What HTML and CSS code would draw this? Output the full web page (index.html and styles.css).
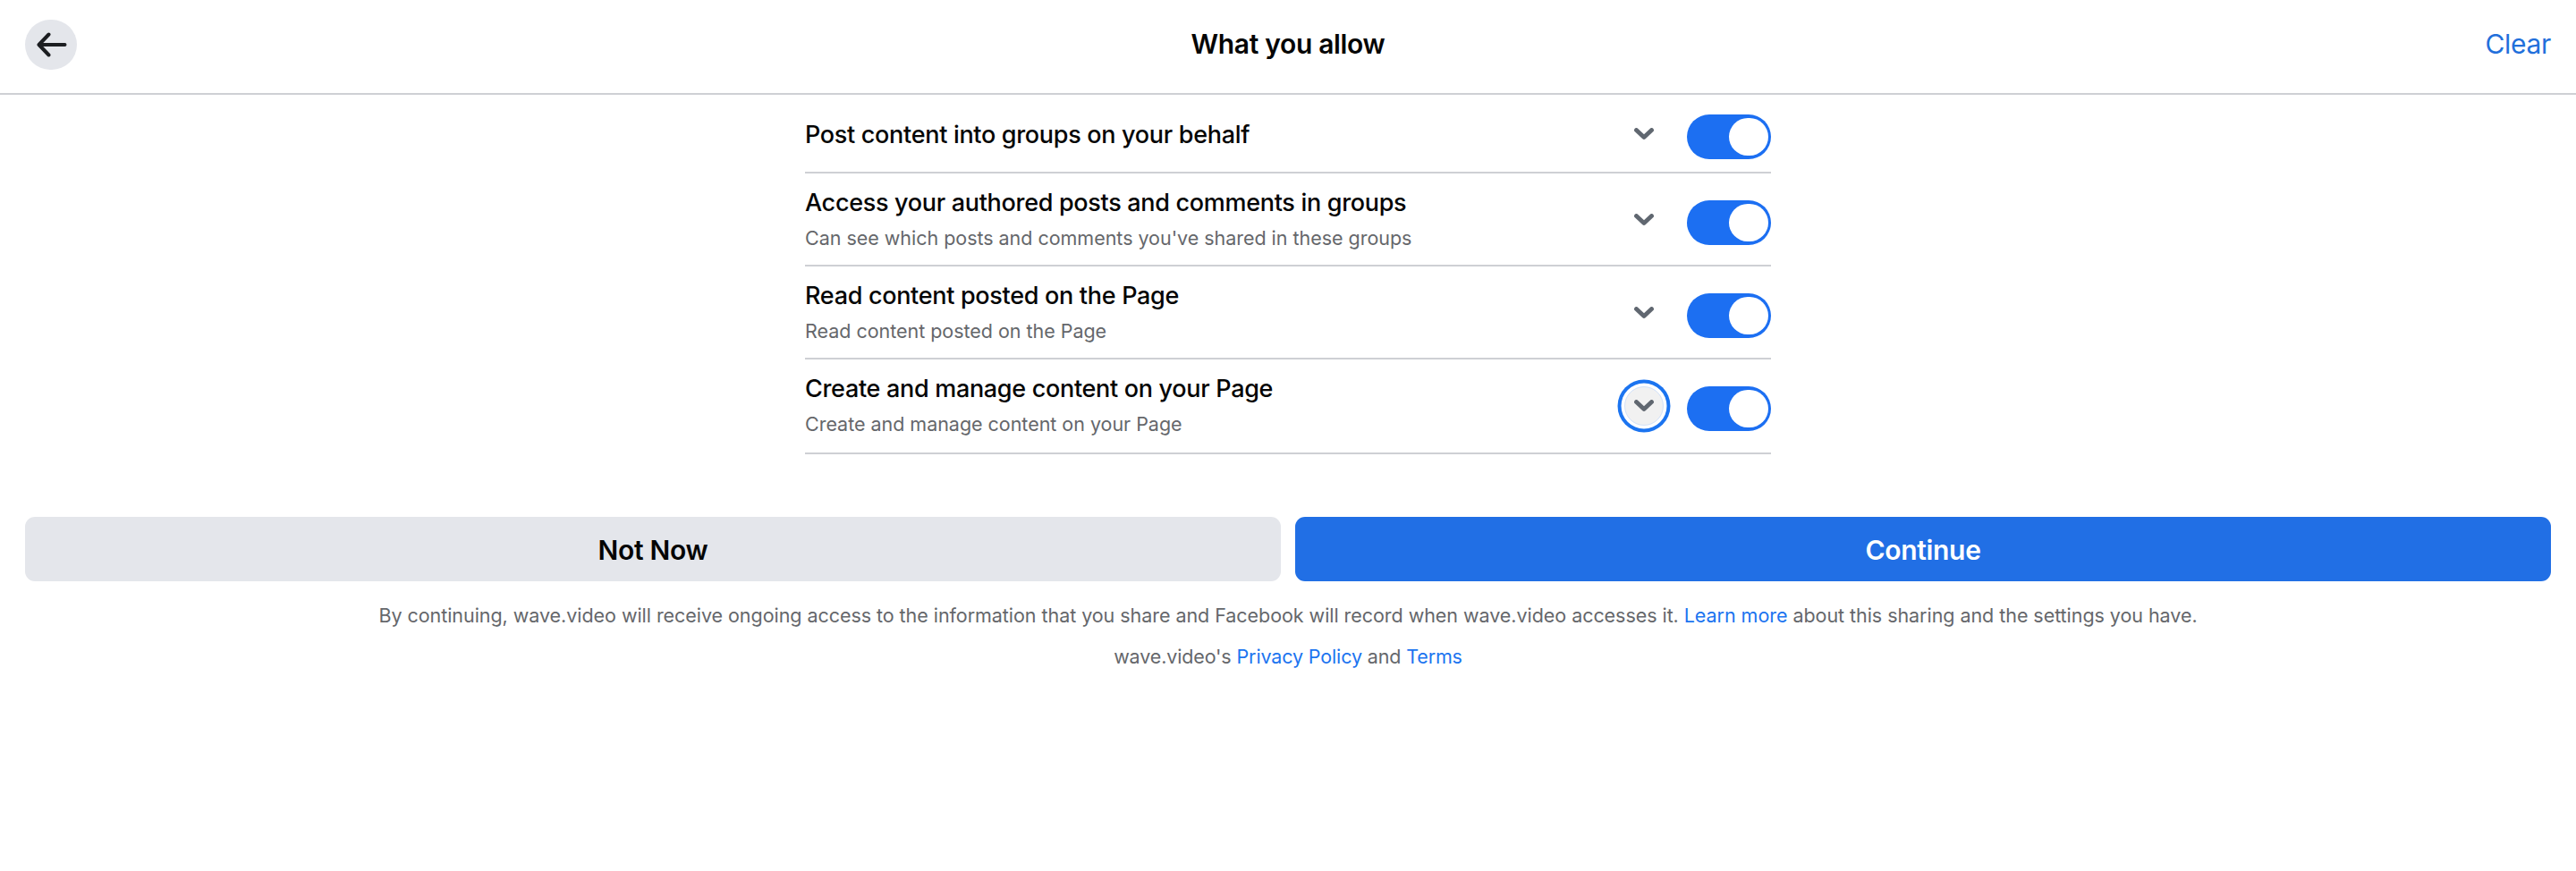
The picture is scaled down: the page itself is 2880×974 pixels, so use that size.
FILE: index.html
```html
<!DOCTYPE html>
<html lang="en">
<head>
  <meta charset="UTF-8">
  <meta name="viewport" content="width=device-width, initial-scale=1">
  <title>What you allow</title>
  <link rel="stylesheet" href="styles.css">
</head>
<body>
  <!-- Header -->
  <header class="header">
    <button class="back-button" aria-label="Back">
      <svg class="back-icon" viewBox="0 0 34 28">
        <path d="M31.5 14H3M13.5 2.5L2.5 14l11 11.5"/>
      </svg>
    </button>
    <h1 class="header-title">What you allow</h1>
    <a class="clear-link" href="#">Clear</a>
  </header>

  <!-- Permissions -->
  <main class="permissions">
    <div class="permission permission-single">
      <div class="permission-text">
        <div class="permission-title">Post content into groups on your behalf</div>
      </div>
      <button class="expand" aria-label="Show details">
        <svg class="chevron" viewBox="0 0 22 14"><path d="M2.5 2.5L11 10.5l8.5-8"/></svg>
      </button>
      <div class="toggle" role="switch" aria-checked="true"><div class="knob"></div></div>
    </div>

    <div class="permission">
      <div class="permission-text">
        <div class="permission-title">Access your authored posts and comments in groups</div>
        <div class="permission-desc">Can see which posts and comments you've shared in these groups</div>
      </div>
      <button class="expand" aria-label="Show details">
        <svg class="chevron" viewBox="0 0 22 14"><path d="M2.5 2.5L11 10.5l8.5-8"/></svg>
      </button>
      <div class="toggle" role="switch" aria-checked="true"><div class="knob"></div></div>
    </div>

    <div class="permission">
      <div class="permission-text">
        <div class="permission-title">Read content posted on the Page</div>
        <div class="permission-desc">Read content posted on the Page</div>
      </div>
      <button class="expand" aria-label="Show details">
        <svg class="chevron" viewBox="0 0 22 14"><path d="M2.5 2.5L11 10.5l8.5-8"/></svg>
      </button>
      <div class="toggle" role="switch" aria-checked="true"><div class="knob"></div></div>
    </div>

    <div class="permission permission-last">
      <div class="permission-text">
        <div class="permission-title">Create and manage content on your Page</div>
        <div class="permission-desc">Create and manage content on your Page</div>
      </div>
      <button class="expand focused" aria-label="Show details">
        <svg class="chevron" viewBox="0 0 22 14"><path d="M2.5 2.5L11 10.5l8.5-8"/></svg>
      </button>
      <div class="toggle" role="switch" aria-checked="true"><div class="knob"></div></div>
    </div>
  </main>

  <!-- Actions -->
  <div class="actions">
    <button class="btn btn-secondary">Not Now</button>
    <button class="btn btn-primary">Continue</button>
  </div>

  <!-- Footer -->
  <footer class="footer">
    <p>By continuing, wave.video will receive ongoing access to the information that you share and Facebook will record when wave.video accesses it. <a href="#">Learn more</a> about this sharing and the settings you have.</p>
    <p class="footer-links">wave.video's <a href="#">Privacy Policy</a> and <a href="#">Terms</a></p>
  </footer>
</body>
</html>
```
FILE: styles.css
```css
* {
  margin: 0;
  padding: 0;
  box-sizing: border-box;
}

body {
  font-family: Inter, "Liberation Sans", sans-serif;
  background: #fff;
  color: #050505;
}

button {
  border: none;
  font-family: inherit;
}

a {
  color: #1b74f0;
  text-decoration: none;
}

/* === HEADER === */
.header {
  display: grid;
  grid-template-columns: 1fr auto 1fr;
  align-items: center;
  height: 106px;
  padding: 0 28px 6px;
  border-bottom: 2px solid #ced0d4;
}

.back-button {
  display: flex;
  align-items: center;
  justify-content: center;
  width: 58px;
  height: 56px;
  margin-top: 2px;
  padding-left: 2px;
  border-radius: 28px;
  background: #e4e6eb;
}

.back-icon {
  width: 34px;
  height: 28px;
  fill: none;
  stroke: #1c1e21;
  stroke-width: 4;
  stroke-linecap: round;
  stroke-linejoin: round;
}

.header-title {
  font-size: 30px;
  font-weight: 600;
  line-height: 36px;
  letter-spacing: -0.33px;
}

.clear-link {
  justify-self: end;
  font-size: 30px;
  line-height: 36px;
  letter-spacing: -0.3px;
  color: #216fdb;
}

/* === PERMISSIONS === */
.permissions {
  width: 1080px;
  margin: 0 auto;
}

.permission {
  display: flex;
  height: 104px;
  border-bottom: 2px solid #ced0d4;
}

.permission-single {
  height: 88px;
}

.permission-last {
  height: 106px;
}

.permission-text {
  flex: 1;
  padding-top: 16px;
}

.permission-single .permission-text {
  padding-top: 28px;
}

.permission-title {
  font-size: 27px;
  font-weight: 500;
  line-height: 34px;
  letter-spacing: -0.31px;
}

.permission-desc {
  margin-top: 8px;
  font-size: 21.5px;
  line-height: 28px;
  letter-spacing: -0.03px;
  color: #65676b;
}

.expand {
  display: flex;
  align-items: center;
  justify-content: center;
  width: 44px;
  height: 44px;
  margin: 30px 26px 0 0;
  border-radius: 50%;
  background: none;
}

.permission-single .expand {
  margin-top: 22px;
}

.expand.focused {
  border: 1px solid #d3e2f8;
  background: #f1f1f1;
  box-shadow: 0 0 0 3.5px #fff, 0 0 0 7.5px #1b74f0;
}

.chevron {
  width: 22px;
  height: 14px;
  fill: none;
  stroke: #606770;
  stroke-width: 4.8;
  stroke-linecap: round;
  stroke-linejoin: round;
}

/* === TOGGLE === */
.toggle {
  display: flex;
  justify-content: flex-end;
  width: 94px;
  height: 50px;
  margin-top: 30px;
  padding: 4px 3px 4px 0;
  border-radius: 25px;
  background: #1c6ff2;
}

.permission-single .toggle {
  margin-top: 22px;
}

.knob {
  width: 44px;
  height: 42px;
  border-radius: 22px;
  background: #fff;
}

/* === ACTIONS === */
.actions {
  display: flex;
  gap: 16px;
  margin-top: 70px;
  padding: 0 28px;
}

.btn {
  flex: 1;
  height: 72px;
  padding-top: 2px;
  border-radius: 11px;
  font-size: 30px;
  font-weight: 600;
  letter-spacing: -0.3px;
}

.btn-secondary {
  background: #e4e6eb;
  color: #050505;
}

.btn-primary {
  background: #216fe5;
  color: #fff;
}

/* === FOOTER === */
.footer {
  margin-top: 23px;
  text-align: center;
  font-size: 21.5px;
  line-height: 30px;
  letter-spacing: -0.05px;
  color: #65676b;
}

.footer-links {
  margin-top: 16px;
  letter-spacing: -0.14px;
}
```
